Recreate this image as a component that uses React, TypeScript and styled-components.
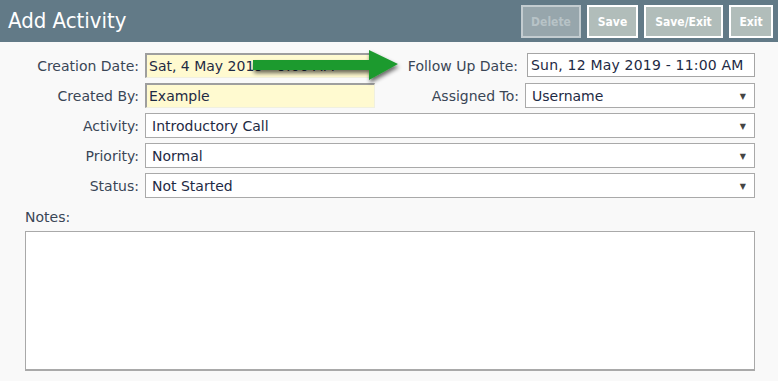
import React from "react";
import styled, { createGlobalStyle } from "styled-components";

const Global = createGlobalStyle`
  html, body { margin: 0; padding: 0; background: #f9f9f9; }
  body { font-family: "DejaVu Sans", Verdana, sans-serif; }
  * { box-sizing: border-box; }
`;

const Page = styled.div`
  position: relative;
  width: 778px;
  height: 381px;
  background: #f9f9f9;
  overflow: hidden;
`;

const Header = styled.header`
  height: 42px;
  background: #627a87;
  display: flex;
  align-items: center;
  justify-content: space-between;
  padding: 0 5px 0 8px;
`;

const Title = styled.h1`
  margin: 0;
  font-family: "DejaVu Sans Condensed", "DejaVu Sans", sans-serif;
  font-stretch: condensed;
  font-weight: normal;
  font-size: 22px;
  color: #ffffff;
  padding-bottom: 2px;
`;

const Buttons = styled.div`
  display: flex;
  gap: 6px;
  padding-top: 1px;
`;

const Button = styled.button<{ $disabled?: boolean; $w: number }>`
  width: ${(p) => p.$w}px;
  height: 33px;
  border: 2px solid ${(p) => (p.$disabled ? "#c3ccd0" : "#ffffff")};
  background: ${(p) => (p.$disabled ? "#97a6ac" : "#b1bdba")};
  color: ${(p) => (p.$disabled ? "#b7c3c7" : "#ffffff")};
  font-family: "DejaVu Sans Condensed", "DejaVu Sans", sans-serif;
  font-stretch: condensed;
  font-weight: bold;
  font-size: 12px;
  padding: 0;
  cursor: pointer;
`;

const Form = styled.div`
  padding: 11px 23px 0 0;
  display: flex;
  flex-direction: column;
  gap: 6px;
`;

const Row = styled.div`
  display: flex;
  align-items: center;
  height: 24px;
`;

const Label = styled.label<{ $w?: number }>`
  flex: ${(p) => (p.$w ? `0 0 ${p.$w}px` : "1 1 auto")};
  text-align: right;
  font-size: 14px;
  color: #3a4656;
  padding: 1px 6px 0 0;
  white-space: nowrap;
`;

const ReadOnly = styled.div<{ $w: number }>`
  width: ${(p) => p.$w}px;
  height: 25px;
  background: #fffad0;
  border-style: solid;
  border-width: 2px 1px 1px 2px;
  border-color: #9e9e9e #f0f0e0 #f0f0e0 #9e9e9e;
  font-size: 14px;
  color: #1e2a44;
  padding: 3px 0 0 2px;
  white-space: nowrap;
  overflow: hidden;
`;

const TextInput = styled.div<{ $w: number }>`
  width: ${(p) => p.$w}px;
  height: 24px;
  margin-left: 3px;
  background: #ffffff;
  border: 1px solid #a5a5a5;
  font-size: 14px;
  letter-spacing: 0.2px;
  color: #1e2a44;
  padding: 3px 0 0 3px;
  white-space: nowrap;
`;

const Select = styled.div<{ $w?: number }>`
  ${(p) => (p.$w ? `width: ${p.$w}px;` : "flex: 1 1 auto;")}
  height: 25px;
  background: #ffffff;
  border: 1px solid #a9a9a9;
  font-size: 14px;
  color: #1e2a44;
  padding: 1px 8px 0 6px;
  display: flex;
  align-items: center;
  justify-content: space-between;
`;

const Caret = styled.span`
  font-size: 8px;
  color: #444;
  margin-top: 1px;
`;

const Notes = styled.div`
  padding: 12px 23px 0 25px;
`;

const NotesLabel = styled.div`
  font-size: 14px;
  color: #3a4656;
  margin-bottom: 6px;
`;

const TextArea = styled.div`
  height: 140px;
  background: #ffffff;
  border: 1px solid #a9a9a9;
  border-bottom-width: 2px;
`;

const Arrow = styled.svg`
  position: absolute;
  left: 250px;
  top: 47px;
  overflow: visible;
`;

const Dropdown = ({ value, w }: { value: string; w?: number }) => (
  <Select $w={w}>
    <span>{value}</span>
    <Caret>▼</Caret>
  </Select>
);

export default function App() {
  return (
    <Page>
      <Global />
      <Header>
        <Title>Add Activity</Title>
        <Buttons>
          <Button $disabled $w={60}>Delete</Button>
          <Button $w={51}>Save</Button>
          <Button $w={79}>Save/Exit</Button>
          <Button $w={44}>Exit</Button>
        </Buttons>
      </Header>
      <Form>
        <Row>
          <Label $w={145}>Creation Date:</Label>
          <ReadOnly $w={230}>Sat, 4 May 2019 - 9:00 AM</ReadOnly>
          <Label>Follow Up Date:</Label>
          <TextInput $w={228}>Sun, 12 May 2019 - 11:00 AM</TextInput>
        </Row>
        <Row>
          <Label $w={145}>Created By:</Label>
          <ReadOnly $w={230}>Example</ReadOnly>
          <Label>Assigned To:</Label>
          <Dropdown value="Username" w={230} />
        </Row>
        <Row>
          <Label $w={145}>Activity:</Label>
          <Dropdown value="Introductory Call" />
        </Row>
        <Row>
          <Label $w={145}>Priority:</Label>
          <Dropdown value="Normal" />
        </Row>
        <Row>
          <Label $w={145}>Status:</Label>
          <Dropdown value="Not Started" />
        </Row>
      </Form>
      <Notes>
        <NotesLabel>Notes:</NotesLabel>
        <TextArea />
      </Notes>
      <Arrow width="150" height="36" viewBox="0 0 150 36">
        <defs>
          <filter id="sh" x="-20%" y="-40%" width="140%" height="200%">
            <feGaussianBlur in="SourceAlpha" stdDeviation="2" />
            <feOffset dx="1" dy="3" result="b" />
            <feComponentTransfer>
              <feFuncA type="linear" slope="0.6" />
            </feComponentTransfer>
            <feMerge>
              <feMergeNode />
              <feMergeNode in="SourceGraphic" />
            </feMerge>
          </filter>
        </defs>
        <path
          d="M3 13 H119 V3 L148 17 L119 33 V23 H3 Z"
          fill="#1f9a2f"
          filter="url(#sh)"
        />
      </Arrow>
    </Page>
  );
}
